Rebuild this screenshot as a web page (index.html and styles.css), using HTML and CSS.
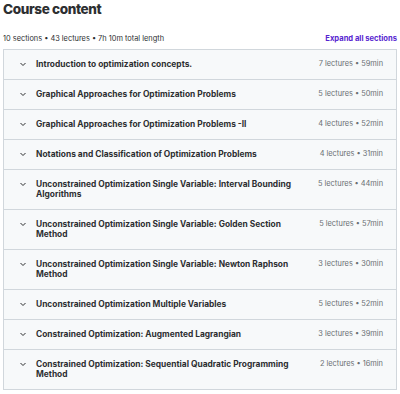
FILE: index.html
```html
<!DOCTYPE html>
<html lang="en">
<head>
    <meta charset="UTF-8">
    <meta name="viewport" content="width=device-width, initial-scale=1.0">
    <title>Course content</title>
    <link rel="stylesheet" href="styles.css">
</head>
<body>
    <div class="curriculum">
        <h2 class="heading">Course content</h2>

        <div class="summary">
            <span class="stats">10 sections • 43 lectures • 7h 10m total length</span>
            <button class="expand-btn">Expand all sections</button>
        </div>

        <!-- Section list -->
        <div class="sections">
            <div class="section">
                <span class="chevron"><svg width="8" height="8" viewBox="0 0 8 8"><path d="M1.5 3 L4 5.5 L6.5 3" fill="none" stroke="#2d2f31" stroke-width="1"/></svg></span>
                <span class="title">Introduction to optimization concepts.</span>
                <span class="meta">7 lectures • 59min</span>
            </div>
            <div class="section">
                <span class="chevron"><svg width="8" height="8" viewBox="0 0 8 8"><path d="M1.5 3 L4 5.5 L6.5 3" fill="none" stroke="#2d2f31" stroke-width="1"/></svg></span>
                <span class="title">Graphical Approaches for Optimization Problems</span>
                <span class="meta">5 lectures • 50min</span>
            </div>
            <div class="section">
                <span class="chevron"><svg width="8" height="8" viewBox="0 0 8 8"><path d="M1.5 3 L4 5.5 L6.5 3" fill="none" stroke="#2d2f31" stroke-width="1"/></svg></span>
                <span class="title">Graphical Approaches for Optimization Problems -II</span>
                <span class="meta">4 lectures • 52min</span>
            </div>
            <div class="section">
                <span class="chevron"><svg width="8" height="8" viewBox="0 0 8 8"><path d="M1.5 3 L4 5.5 L6.5 3" fill="none" stroke="#2d2f31" stroke-width="1"/></svg></span>
                <span class="title">Notations and Classification of Optimization Problems</span>
                <span class="meta">4 lectures • 31min</span>
            </div>
            <div class="section">
                <span class="chevron"><svg width="8" height="8" viewBox="0 0 8 8"><path d="M1.5 3 L4 5.5 L6.5 3" fill="none" stroke="#2d2f31" stroke-width="1"/></svg></span>
                <span class="title">Unconstrained Optimization Single Variable: Interval Bounding Algorithms</span>
                <span class="meta">5 lectures • 44min</span>
            </div>
            <div class="section">
                <span class="chevron"><svg width="8" height="8" viewBox="0 0 8 8"><path d="M1.5 3 L4 5.5 L6.5 3" fill="none" stroke="#2d2f31" stroke-width="1"/></svg></span>
                <span class="title">Unconstrained Optimization Single Variable: Golden Section Method</span>
                <span class="meta">5 lectures • 57min</span>
            </div>
            <div class="section">
                <span class="chevron"><svg width="8" height="8" viewBox="0 0 8 8"><path d="M1.5 3 L4 5.5 L6.5 3" fill="none" stroke="#2d2f31" stroke-width="1"/></svg></span>
                <span class="title">Unconstrained Optimization Single Variable: Newton Raphson Method</span>
                <span class="meta">3 lectures • 30min</span>
            </div>
            <div class="section">
                <span class="chevron"><svg width="8" height="8" viewBox="0 0 8 8"><path d="M1.5 3 L4 5.5 L6.5 3" fill="none" stroke="#2d2f31" stroke-width="1"/></svg></span>
                <span class="title">Unconstrained Optimization Multiple Variables</span>
                <span class="meta">5 lectures • 52min</span>
            </div>
            <div class="section">
                <span class="chevron"><svg width="8" height="8" viewBox="0 0 8 8"><path d="M1.5 3 L4 5.5 L6.5 3" fill="none" stroke="#2d2f31" stroke-width="1"/></svg></span>
                <span class="title">Constrained Optimization: Augmented Lagrangian</span>
                <span class="meta">3 lectures • 39min</span>
            </div>
            <div class="section">
                <span class="chevron"><svg width="8" height="8" viewBox="0 0 8 8"><path d="M1.5 3 L4 5.5 L6.5 3" fill="none" stroke="#2d2f31" stroke-width="1"/></svg></span>
                <span class="title">Constrained Optimization: Sequential Quadratic Programming Method</span>
                <span class="meta">2 lectures • 16min</span>
            </div>
        </div>
    </div>
</body>
</html>
```

FILE: styles.css
```css
body {
    margin: 0;
    background-color: #fff;
    font-family: Inter, "Noto Sans", sans-serif;
    color: #2d2f31;
}
.curriculum {
    padding: 0 3px;
}
.heading {
    margin: 0;
    font-size: 13.6px;
    font-weight: 800;
    line-height: 19px;
    letter-spacing: -0.4px;
}
.summary {
    display: flex;
    justify-content: space-between;
    align-items: center;
    margin-top: 8px;
    height: 22px;
}
.stats {
    font-size: 7.4px;
    color: #2d2f31;
}
.expand-btn {
    background: none;
    border: none;
    padding: 0;
    font-family: inherit;
    font-size: 7.6px;
    font-weight: 700;
    color: #5624d0;
    cursor: pointer;
}
.sections {
    border: 1px solid #d1d7dc;
}
.section {
    display: flex;
    align-items: flex-start;
    background-color: #f7f9fa;
    border-top: 1px solid #d1d7dc;
    padding: 9px 13px 10px 15px;
}
.section:first-child {
    border-top: none;
}
.chevron {
    width: 17px;
    flex-shrink: 0;
    height: 10px;
    display: flex;
    align-items: center;
}
.title {
    flex: 1;
    font-size: 8.4px;
    font-weight: 700;
    line-height: 10px;
    padding-right: 14px;
}
.meta {
    flex-shrink: 0;
    font-size: 7.4px;
    line-height: 10px;
    color: #6a6f73;
}
```
